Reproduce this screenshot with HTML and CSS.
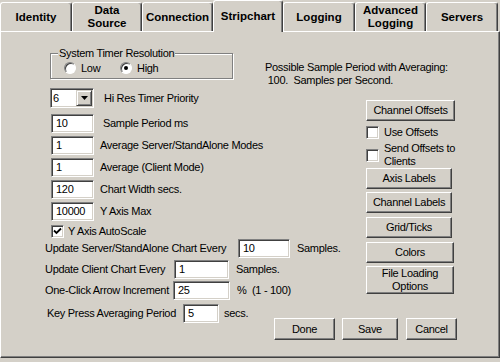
FILE: index.html
```html
<!DOCTYPE html>
<html lang="en">
<head>
    <meta charset="UTF-8">
    <title>Stripchart Settings</title>
    <link rel="stylesheet" href="styles.css">
</head>
<body>
    <div class="dialog">
        <div class="tabs">
            <div class="tab w72">Identity</div>
            <div class="tab w70">Data<br>Source</div>
            <div class="tab w71">Connection</div>
            <div class="tab w70 active">Stripchart</div>
            <div class="tab w72">Logging</div>
            <div class="tab w71">Advanced<br>Logging</div>
            <div class="tab w72">Servers</div>
        </div>
        <div class="panel">
            <div class="top-row">
                <fieldset class="group">
                    <legend>System Timer Resolution</legend>
                    <div class="radios">
                        <label class="radio first"><span class="radio-dot"></span>Low</label>
                        <label class="radio"><span class="radio-dot checked"></span>High</label>
                    </div>
                </fieldset>
                <div class="info">Possible Sample Period with Averaging:<br>&nbsp;100.&nbsp; Samples per Second.</div>
            </div>

            <div class="middle">
                <div class="left-col">
                    <div class="row combo-row">
                        <div class="combo">
                            <span class="combo-text">6</span>
                            <span class="combo-btn">
                                <svg width="7" height="4" viewBox="0 0 7 4"><polygon points="0,0 7,0 3.5,4" fill="#000"/></svg>
                            </span>
                        </div>
                        <span class="lbl">Hi Res Timer Priority</span>
                    </div>
                    <div class="row field-row first">
                        <div class="edit w43">10</div>
                        <span class="lbl wide-gap">Sample Period ms</span>
                    </div>
                    <div class="row field-row">
                        <div class="edit w43">1</div>
                        <span class="lbl">Average Server/StandAlone Modes</span>
                    </div>
                    <div class="row field-row">
                        <div class="edit w43">1</div>
                        <span class="lbl">Average (Client Mode)</span>
                    </div>
                    <div class="row field-row">
                        <div class="edit w43">120</div>
                        <span class="lbl">Chart Width secs.</span>
                    </div>
                    <div class="row field-row">
                        <div class="edit w43">10000</div>
                        <span class="lbl">Y Axis Max</span>
                    </div>
                    <div class="row check-row">
                        <span class="checkbox">
                            <svg width="9" height="9" viewBox="0 0 9 9"><path d="M1 3.5 L3.5 6 L8 1.5" stroke="#000" stroke-width="1.8" fill="none"/></svg>
                        </span>
                        <span class="lbl">Y Axis AutoScale</span>
                    </div>
                    <div class="row upd-row">
                        <span class="fixed w193">Update Server/StandAlone Chart Every</span>
                        <div class="edit w52">10</div>
                        <span class="unit">Samples.</span>
                    </div>
                    <div class="row upd-row gap">
                        <span class="fixed w129">Update Client Chart Every</span>
                        <div class="edit w55">1</div>
                        <span class="unit">Samples.</span>
                    </div>
                    <div class="row upd-row gap">
                        <span class="fixed w128">One-Click Arrow Increment</span>
                        <div class="edit w57">25</div>
                        <span class="unit">%&nbsp; (1 - 100)</span>
                    </div>
                </div>

                <div class="right-col">
                    <div class="btn w89">Channel Offsets</div>
                    <div class="rcheck use-offsets">
                        <span class="checkbox"></span>
                        <span class="lbl">Use Offsets</span>
                    </div>
                    <div class="rcheck send-offsets">
                        <span class="checkbox"></span>
                        <span class="lbl">Send Offsets to<br>Clients</span>
                    </div>
                    <div class="btn w86">Axis Labels</div>
                    <div class="btn w86 mt3">Channel Labels</div>
                    <div class="btn w86 mt4">Grid/Ticks</div>
                    <div class="btn w88 mt4">Colors</div>
                    <div class="btn w88 mt3 tall">File Loading<br>Options</div>
                </div>
            </div>

            <div class="bottom-row">
                <div class="row">
                    <span class="fixed w136">Key Press Averaging Period</span>
                    <div class="edit w36">5</div>
                    <span class="unit short">secs.</span>
                </div>
                <div class="buttons">
                    <div class="btn done">Done</div>
                    <div class="btn save">Save</div>
                    <div class="btn cancel">Cancel</div>
                </div>
            </div>
        </div>
    </div>
</body>
</html>
```

FILE: styles.css
```css
* {
    box-sizing: border-box;
}
html, body {
    margin: 0;
}
body {
    background: #d4d0c8;
    font-family: "Liberation Sans", Arial, sans-serif;
    font-size: 11px;
    line-height: 13px;
    letter-spacing: -0.3px;
    color: #000;
}
.dialog {
    width: 500px;
    height: 362px;
    overflow: hidden;
}

/* tab strip */
.tabs {
    display: flex;
    align-items: flex-end;
    height: 31px;
}
.tab {
    height: 29px;
    display: flex;
    align-items: center;
    justify-content: center;
    text-align: center;
    font-weight: bold;
    font-size: 11.5px;
    letter-spacing: 0;
    background: #d4d0c8;
    border-top: 1px solid #fff;
    border-left: 1px solid #fff;
    border-right: 1px solid #404040;
    border-radius: 3px 3px 0 0;
    box-shadow: inset -1px 0 #808080;
}
.tab.active {
    height: 32px;
    margin-bottom: -1px;
    position: relative;
    z-index: 1;
}
.w70 { width: 70px; }
.w71 { width: 71px; }
.w72 { width: 72px; }

/* page */
.panel {
    height: 327px;
    padding: 15px 0 0 44px;
    border-top: 1px solid #fff;
    border-left: 1px solid #fff;
    border-right: 1px solid #404040;
    border-bottom: 1px solid #404040;
    box-shadow: inset -1px -1px #808080;
}
.top-row {
    display: flex;
    align-items: flex-start;
    height: 40px;
}
.group {
    margin: 0 0 0 5px;
    width: 183px;
    padding: 0 0 3px 13px;
    border: 1px solid #808080;
    box-shadow: inset 1px 1px #fff, 1px 1px #fff;
}
.group legend {
    margin-left: -6px;
    padding: 0 1px;
    background: #d4d0c8;
}
.radios {
    display: flex;
    align-items: center;
    height: 14px;
    margin-top: 1px;
}
.radio {
    display: flex;
    align-items: center;
}
.radio.first {
    width: 56px;
}
.radio-dot {
    width: 12px;
    height: 12px;
    margin-right: 5px;
    display: flex;
    align-items: center;
    justify-content: center;
    border-radius: 50%;
    background: #fff;
    border: 1px solid;
    border-color: #808080 #fff #fff #808080;
    box-shadow: inset 1px 1px #404040;
}
.radio-dot.checked::after {
    content: "";
    width: 4px;
    height: 4px;
    border-radius: 50%;
    background: #000;
}
.info {
    margin: 14px 0 0 32px;
}

.middle {
    display: flex;
    margin-top: 1px;
}
.left-col {
    width: 321px;
}
.right-col {
    width: 92px;
    padding-top: 12px;
    display: flex;
    flex-direction: column;
    align-items: flex-start;
}

.row {
    display: flex;
    align-items: center;
    height: 19px;
    white-space: nowrap;
}
.combo-row {
    height: 20px;
    padding-left: 5px;
}
.combo-row .lbl {
    margin-left: 10px;
}
.field-row {
    margin-top: 3px;
    padding-left: 6px;
}
.field-row.first {
    margin-top: 6px;
}
.lbl {
    margin-left: 6px;
}
.lbl.wide-gap {
    margin-left: 9px;
}

/* sunken controls */
.edit {
    height: 19px;
    display: flex;
    align-items: center;
    padding-left: 4px;
    background: #fff;
    border: 1px solid;
    border-color: #808080 #fff #fff #808080;
    box-shadow: inset 1px 1px #404040, inset -1px -1px #d4d0c8;
}
.w36 { width: 36px; }
.w43 { width: 43px; }
.w52 { width: 52px; }
.w55 { width: 55px; }
.w57 { width: 57px; }

.combo {
    width: 44px;
    height: 20px;
    display: flex;
    padding: 2px;
    background: #fff;
    border: 1px solid;
    border-color: #808080 #fff #fff #808080;
    box-shadow: inset 1px 1px #404040, inset -1px -1px #d4d0c8;
}
.combo-text {
    flex: 1;
    padding-left: 1px;
    line-height: 16px;
    margin-top: -1px;
    margin-left: -1px;
}
.combo-btn {
    width: 16px;
    height: 16px;
    margin: -1px -1px 0 0;
    display: flex;
    align-items: center;
    justify-content: center;
    background: #d4d0c8;
    border: 1px solid;
    border-color: #d4d0c8 #404040 #404040 #d4d0c8;
    box-shadow: inset 1px 1px #fff, inset -1px -1px #808080;
}

.checkbox {
    width: 13px;
    height: 13px;
    flex: none;
    display: flex;
    align-items: center;
    justify-content: center;
    background: #fff;
    border: 1px solid;
    border-color: #808080 #fff #fff #808080;
    box-shadow: inset 1px 1px #404040, inset -1px -1px #d4d0c8;
}
.check-row {
    margin-top: 3px;
    height: 15px;
    padding-left: 6px;
}
.check-row .lbl {
    margin-left: 4px;
}

.upd-row.gap {
    margin-top: 2px;
}
.fixed {
    flex: none;
}
.w128 { width: 128px; }
.w129 { width: 129px; }
.w136 { width: 136px; }
.w193 { width: 193px; }
.unit {
    margin-left: 7px;
}
.unit.short {
    margin-left: 5px;
}

/* raised buttons */
.btn {
    height: 21px;
    display: flex;
    align-items: center;
    justify-content: center;
    text-align: center;
    background: #d4d0c8;
    border: 1px solid;
    border-color: #fff #404040 #404040 #fff;
    box-shadow: inset -1px -1px #808080;
}
.btn.tall {
    height: 28px;
}
.w86 { width: 86px; }
.w88 { width: 88px; }
.w89 { width: 89px; }
.mt3 { margin-top: 3px; }
.mt4 { margin-top: 4px; }

.rcheck {
    display: flex;
    align-items: center;
}
.rcheck .lbl {
    margin-left: 5px;
}
.use-offsets {
    height: 16px;
    margin-top: 3px;
}
.send-offsets {
    height: 26px;
    margin-top: 2px;
}

.bottom-row {
    display: flex;
    align-items: flex-start;
    width: 412px;
    margin-top: 4px;
    padding-left: 2px;
}
.buttons {
    display: flex;
    margin-left: auto;
    margin-top: 14px;
}
.buttons .btn {
    height: 22px;
}
.done { width: 61px; }
.save { width: 56px; margin-left: 7px; }
.cancel { width: 51px; margin-left: 8px; }
```
